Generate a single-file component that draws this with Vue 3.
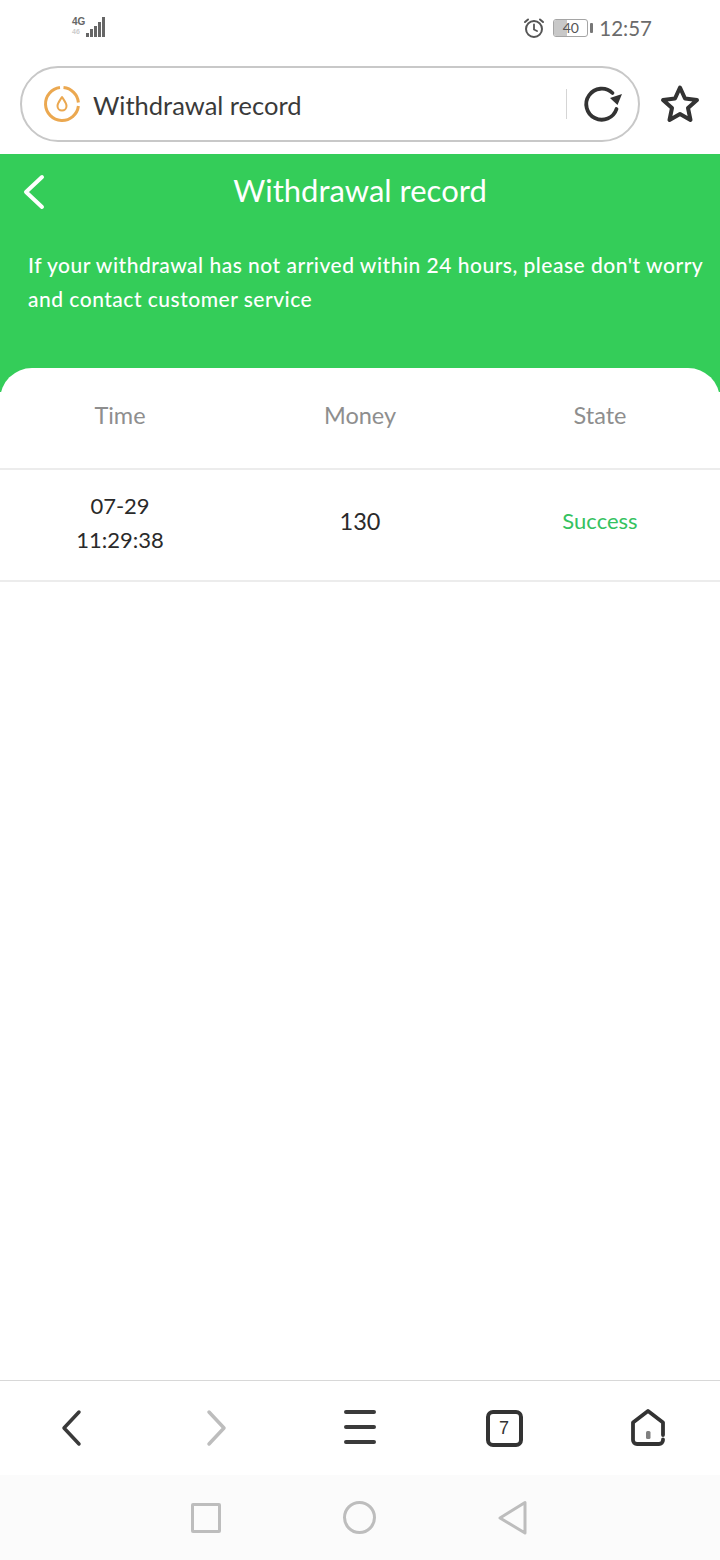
<template>
  <div class="phone">
    <!-- status bar -->
    <div class="status-bar">
      <div class="signal">
        <div class="net"><span class="net-top">4G</span><span class="net-bottom">46</span></div>
        <div class="bars">
          <i v-for="h in bars" :key="h" :style="{ height: h + 'px' }"></i>
        </div>
      </div>
      <div class="status-right">
        <svg class="alarm" width="22" height="22" viewBox="0 0 22 22" fill="none" stroke="#555" stroke-width="2" stroke-linecap="round">
          <circle cx="11" cy="12" r="8" />
          <path d="M11 7.5V12.5L14 14" stroke-width="1.8" />
          <path d="M2 5L5 2.5M20 5L17 2.5" />
        </svg>
        <div class="battery">
          <div class="battery-body">
            <div class="battery-fill"></div>
            <span>40</span>
          </div>
          <div class="battery-cap"></div>
        </div>
        <span class="clock">12:57</span>
      </div>
    </div>

    <!-- address bar -->
    <div class="address-row">
      <div class="address-pill">
        <svg class="site-icon" width="38" height="38" viewBox="0 0 38 38" fill="none">
          <path d="M20.5 2.600A16.500 16.500 0 0 1 35.400 17.500" stroke="#eba850" stroke-width="3" />
          <path d="M35.400 21A16.500 16.500 0 1 1 17 2.600" stroke="#eba850" stroke-width="3" />
          <path d="M19 12C16.500 16 14.500 18 14.500 21A4.500 4.500 0 0 0 23.500 21C23.500 18 21.500 16 19 12Z" stroke="#eba850" stroke-width="2" stroke-linejoin="round" />
        </svg>
        <span class="address-text">Withdrawal record</span>
        <div class="address-sep"></div>
        <svg class="reload" width="42" height="40" viewBox="0 0 42 40" fill="none">
          <path d="M35.500 25A15.500 15.500 0 1 1 31.500 9" stroke="#333" stroke-width="3.800" stroke-linecap="round" />
          <path d="M41 10L36.500 21L29 14Z" fill="#333" />
        </svg>
      </div>
      <svg class="star" width="42" height="42" viewBox="0 0 42 42" fill="none">
        <path d="M21 4.500L26 15.500L38 17L29 25L31.500 37L21 31L10.500 37L13 25L4 17L16 15.500Z" stroke="#333" stroke-width="4" stroke-linejoin="round" />
      </svg>
    </div>

    <!-- page -->
    <div class="page">
      <header class="green-head">
        <div class="title-row">
          <svg class="back" width="24" height="36" viewBox="0 0 24 36" fill="none">
            <path d="M20 3L4 18L20 33" stroke="#fff" stroke-width="4" stroke-linecap="round" stroke-linejoin="round" />
          </svg>
          <h1 class="title">Withdrawal record</h1>
        </div>
        <p class="notice">If your withdrawal has not arrived within 24 hours, please don't worry and contact customer service</p>
      </header>

      <div class="sheet">
        <div class="table-row table-head">
          <div>Time</div>
          <div>Money</div>
          <div>State</div>
        </div>
        <div class="table-row table-item" v-for="rec in records" :key="rec.time">
          <div class="time">{{ rec.date }}<br />{{ rec.time }}</div>
          <div>{{ rec.money }}</div>
          <div class="success">{{ rec.state }}</div>
        </div>
      </div>
    </div>

    <!-- browser toolbar -->
    <nav class="toolbar">
      <svg width="24" height="40" viewBox="0 0 24 40" fill="none">
        <path d="M19 4L4 20L19 36" stroke="#3a3a3a" stroke-width="3.500" stroke-linecap="round" stroke-linejoin="round" />
      </svg>
      <svg width="24" height="40" viewBox="0 0 24 40" fill="none">
        <path d="M5 4L20 20L5 36" stroke="#bdbdbd" stroke-width="3.500" stroke-linecap="round" stroke-linejoin="round" />
      </svg>
      <svg width="34" height="40" viewBox="0 0 34 40" fill="none">
        <path d="M3 4H31M3 19H31M3 34H31" stroke="#3a3a3a" stroke-width="4" stroke-linecap="round" />
      </svg>
      <div class="tabs">7</div>
      <svg width="38" height="40" viewBox="0 0 38 40" fill="none">
        <path d="M34 27V14.500L19 3L4 14.500V32A4 4 0 0 0 8 36H30A4 4 0 0 0 34 32V31.500" stroke="#333" stroke-width="3.800" stroke-linecap="round" stroke-linejoin="round" />
        <rect x="17" y="23" width="4.500" height="8" rx="1.500" fill="#808080" />
      </svg>
    </nav>

    <!-- system nav -->
    <div class="system-nav">
      <div class="sys-square"></div>
      <div class="sys-circle"></div>
      <svg width="32" height="36" viewBox="0 0 32 36" fill="none">
        <path d="M28 2.500V33L3 18Z" stroke="#bdbdbd" stroke-width="3" stroke-linejoin="round" />
      </svg>
    </div>
  </div>
</template>

<script setup>
const bars = [4, 8, 11, 15, 20]

const records = [
  { date: '07-29', time: '11:29:38', money: '130', state: 'Success' }
]
</script>

<style>
html, body {
  margin: 0;
  background: #fff;
}
</style>

<style scoped>
.phone {
  width: 720px;
  height: 1560px;
  display: flex;
  flex-direction: column;
  background: #fff;
  font-family: Lato, 'Open Sans', sans-serif;
  overflow: hidden;
}

/* status bar */
.status-bar {
  height: 56px;
  flex: none;
  display: flex;
  justify-content: space-between;
  align-items: center;
  padding: 0 68px 0 72px;
  box-sizing: border-box;
}

.signal {
  display: flex;
  align-items: flex-end;
  gap: 1px;
  height: 20px;
  margin-top: -2px;
}

.net {
  display: flex;
  flex-direction: column;
  font-family: 'Liberation Sans', sans-serif;
  font-weight: 700;
  line-height: 10px;
}

.net-top {
  font-size: 10px;
  color: #666;
}

.net-bottom {
  font-size: 7px;
  color: #ccc;
}

.bars {
  display: flex;
  align-items: flex-end;
  gap: 1.200px;
}

.bars i {
  width: 2.800px;
  background: #666;
  display: block;
}

.status-right {
  display: flex;
  align-items: center;
}

.alarm {
  margin-right: 8px;
}

.battery {
  display: flex;
  align-items: center;
  gap: 1px;
  margin-right: 6px;
}

.battery-body {
  position: relative;
  width: 33px;
  height: 16px;
  border: 1px solid #a5a5a5;
  border-radius: 3px;
  overflow: hidden;
  box-sizing: content-box;
}

.battery-fill {
  width: 13px;
  height: 100%;
  background: #c8c8c8;
}

.battery-body span {
  position: absolute;
  left: 0;
  right: 0;
  top: 0;
  text-align: center;
  font-size: 14px;
  line-height: 16px;
  color: #555;
}

.battery-cap {
  width: 3px;
  height: 10px;
  margin-left: 1px;
  background: #777;
  border-radius: 1px;
}

.clock {
  font-size: 20.500px;
  color: #6b6b6b;
}

/* address bar */
.address-row {
  height: 98px;
  flex: none;
  display: flex;
  align-items: flex-start;
  padding: 10px 0 0 20px;
  box-sizing: border-box;
}

.address-pill {
  width: 620px;
  height: 76px;
  flex: none;
  box-sizing: border-box;
  border: 2px solid #c8c8c8;
  border-radius: 38px;
  display: flex;
  align-items: center;
  padding-left: 21px;
}

.site-icon {
  flex: none;
}

.address-text {
  margin-left: 12px;
  padding-top: 2px;
  font-size: 25.500px;
  color: #3a3a3a;
  flex: 1;
}

.address-sep {
  width: 1px;
  height: 30px;
  background: #d5d5d5;
  margin-right: 14px;
}

.reload {
  margin-right: 15px;
}

.star {
  margin: 17px 0 0 19px;
}

/* page */
.page {
  flex: 1;
  display: flex;
  flex-direction: column;
  min-height: 0;
}

.green-head {
  height: 238px;
  flex: none;
  background: #34cd59;
  color: #fff;
  box-sizing: border-box;
}

.title-row {
  position: relative;
  height: 74px;
  display: flex;
  align-items: center;
  justify-content: center;
}

.back {
  position: absolute;
  left: 22px;
  top: 20px;
}

.title {
  margin: -2px 0 0;
  font-size: 31px;
  font-weight: 400;
  line-height: 74px;
}

.notice {
  margin: 20px 0 0;
  padding: 0 14px 0 28px;
  font-size: 21px;
  line-height: 34px;
  font-weight: 500;
  letter-spacing: 0.5px;
}

.sheet {
  flex: 1;
  margin-top: -24px;
  position: relative;
  background: #fff;
  border-radius: 32px 32px 0 0;
}

.table-row {
  display: grid;
  grid-template-columns: repeat(3, 1fr);
  text-align: center;
  align-items: center;
  box-sizing: border-box;
  font-size: 23.500px;
}

.table-head {
  height: 102px;
  padding-bottom: 6px;
  color: #8e8e8e;
  border-bottom: 2px solid #ececec;
}

.table-item {
  height: 112px;
  padding-bottom: 8px;
  color: #2a2a2a;
  border-bottom: 2px solid #ececec;
}

.time {
  padding-top: 4px;
  line-height: 34px;
  font-size: 22px;
}

.success {
  margin-top: -2px;
  color: #35c25f;
  font-size: 22px;
}

/* toolbar */
.toolbar {
  height: 95px;
  flex: none;
  box-sizing: border-box;
  border-top: 1px solid #d8d8d8;
  display: grid;
  grid-template-columns: repeat(5, 144px);
  justify-items: center;
  align-items: center;
}

.tabs {
  width: 37px;
  height: 37px;
  box-sizing: border-box;
  border: 4px solid #333;
  border-radius: 7px;
  display: flex;
  align-items: center;
  justify-content: center;
  font-family: 'Liberation Sans', sans-serif;
  font-size: 18px;
  color: #333;
}

/* system nav */
.system-nav {
  height: 85px;
  flex: none;
  background: #fbfbfb;
  display: grid;
  grid-template-columns: 154px 154px 152px;
  justify-content: center;
  justify-items: center;
  align-items: center;
  padding-right: 3px;
}

.sys-square {
  width: 30px;
  height: 30px;
  box-sizing: border-box;
  border: 3px solid #bdbdbd;
  border-radius: 2px;
}

.sys-circle {
  width: 33px;
  height: 33px;
  box-sizing: border-box;
  border: 3px solid #bdbdbd;
  border-radius: 50%;
}
</style>
